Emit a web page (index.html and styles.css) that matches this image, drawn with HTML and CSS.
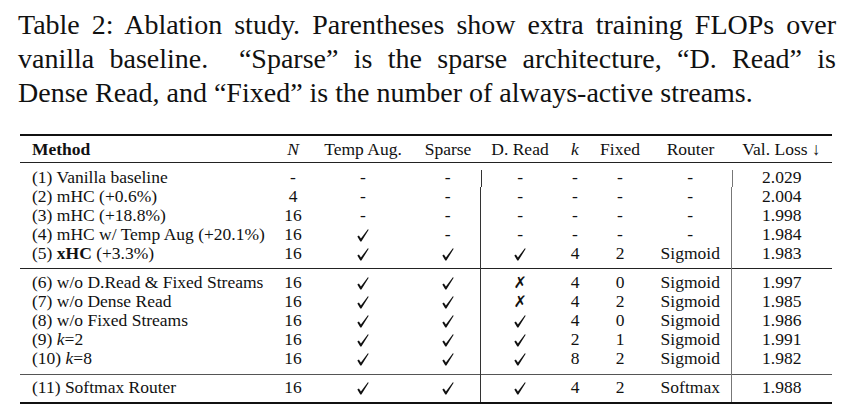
FILE: index.html
```html
<!DOCTYPE html>
<html>
<head>
<meta charset="utf-8">
<link rel="stylesheet" href="styles.css">
</head>
<body>
<svg class="defs" aria-hidden="true">
  <symbol id="ck" viewBox="0 0 12 13">
    <path d="M0.3 7.6 L1.9 6.5 L3.9 9.4 L10.9 0.2 L11.7 0.8 L4.4 12.6 L3.3 12.6 Z"/>
  </symbol>
</svg>
<p class="caption">Table 2: Ablation study. Parentheses show extra training FLOPs over vanilla baseline. &nbsp;“Sparse” is the sparse architecture, “D. Read” is <span class="nw">Dense Read,</span> and “Fixed” is the number of always-active streams.</p>
<table class="abl">
  <colgroup>
    <col class="c-method"><col class="c-n"><col class="c-temp"><col class="c-sparse"><col class="c-dread"><col class="c-k"><col class="c-fixed"><col class="c-router"><col class="c-loss">
  </colgroup>
  <thead>
    <tr>
      <th class="m"><b>Method</b></th><th><i>N</i></th><th>Temp Aug.</th><th>Sparse</th><th>D. Read</th><th><i>k</i></th><th>Fixed</th><th>Router</th><th>Val. Loss ↓</th>
    </tr>
  </thead>
  <tbody class="g1">
    <tr class="first"><td class="m">(1) Vanilla baseline</td><td>-</td><td>-</td><td>-</td><td class="vl">-</td><td>-</td><td>-</td><td>-</td><td class="vr">2.029</td></tr>
    <tr><td class="m">(2) mHC (+0.6%)</td><td>4</td><td>-</td><td>-</td><td class="vl">-</td><td>-</td><td>-</td><td>-</td><td class="vr">2.004</td></tr>
    <tr><td class="m">(3) mHC (+18.8%)</td><td>16</td><td>-</td><td>-</td><td class="vl">-</td><td>-</td><td>-</td><td>-</td><td class="vr">1.998</td></tr>
    <tr><td class="m">(4) mHC w/ Temp Aug (+20.1%)</td><td>16</td><td><svg class="ico"><use href="#ck"/></svg></td><td>-</td><td class="vl">-</td><td>-</td><td>-</td><td>-</td><td class="vr">1.984</td></tr>
    <tr class="last"><td class="m">(5) <b>xHC</b> (+3.3%)</td><td>16</td><td><svg class="ico"><use href="#ck"/></svg></td><td><svg class="ico"><use href="#ck"/></svg></td><td class="vl"><svg class="ico"><use href="#ck"/></svg></td><td>4</td><td>2</td><td>Sigmoid</td><td class="vr">1.983</td></tr>
  </tbody>
  <tbody class="g2">
    <tr class="first"><td class="m">(6) w/o D.Read &amp; Fixed Streams</td><td>16</td><td><svg class="ico"><use href="#ck"/></svg></td><td><svg class="ico"><use href="#ck"/></svg></td><td class="vl x">✗</td><td>4</td><td>0</td><td>Sigmoid</td><td class="vr">1.997</td></tr>
    <tr><td class="m">(7) w/o Dense Read</td><td>16</td><td><svg class="ico"><use href="#ck"/></svg></td><td><svg class="ico"><use href="#ck"/></svg></td><td class="vl x">✗</td><td>4</td><td>2</td><td>Sigmoid</td><td class="vr">1.985</td></tr>
    <tr><td class="m">(8) w/o Fixed Streams</td><td>16</td><td><svg class="ico"><use href="#ck"/></svg></td><td><svg class="ico"><use href="#ck"/></svg></td><td class="vl"><svg class="ico"><use href="#ck"/></svg></td><td>4</td><td>0</td><td>Sigmoid</td><td class="vr">1.986</td></tr>
    <tr><td class="m">(9) <i>k</i>=2</td><td>16</td><td><svg class="ico"><use href="#ck"/></svg></td><td><svg class="ico"><use href="#ck"/></svg></td><td class="vl"><svg class="ico"><use href="#ck"/></svg></td><td>2</td><td>1</td><td>Sigmoid</td><td class="vr">1.991</td></tr>
    <tr class="last"><td class="m">(10) <i>k</i>=8</td><td>16</td><td><svg class="ico"><use href="#ck"/></svg></td><td><svg class="ico"><use href="#ck"/></svg></td><td class="vl"><svg class="ico"><use href="#ck"/></svg></td><td>8</td><td>2</td><td>Sigmoid</td><td class="vr">1.982</td></tr>
  </tbody>
  <tbody class="g3">
    <tr class="first last"><td class="m">(11) Softmax Router</td><td>16</td><td><svg class="ico"><use href="#ck"/></svg></td><td><svg class="ico"><use href="#ck"/></svg></td><td class="vl"><svg class="ico"><use href="#ck"/></svg></td><td>4</td><td>2</td><td>Softmax</td><td class="vr">1.988</td></tr>
  </tbody>
</table>
</body>
</html>
```
FILE: styles.css
```css
html, body {
  margin: 0;
  padding: 0;
  background: #fff;
}
body {
  padding: 8px 16px 0 18px;
  font-family: "Liberation Serif", "Times New Roman", serif;
  color: #111;
}
.defs {
  display: none;
}
.caption {
  margin: 0;
  width: 818px;
  font-size: 28px;
  line-height: 34px;
  text-align: justify;
}
.nw {
  white-space: nowrap;
}
.abl {
  margin: 24px 0 0 2px;
  width: 812px;
  table-layout: fixed;
  border-collapse: collapse;
  font-size: 17.5px;
  border-top: 2px solid #111;
  border-bottom: 2px solid #111;
}
.c-method { width: 256px; }
.c-n { width: 34px; }
.c-temp { width: 106px; }
.c-sparse { width: 64px; }
.c-dread { width: 80px; }
.c-k { width: 30px; }
.c-fixed { width: 60px; }
.c-router { width: 81px; }
.c-loss { width: 101px; }
.abl th, .abl td {
  padding: 0;
  text-align: center;
  line-height: 19px;
  height: 19px;
  white-space: nowrap;
}
.abl th {
  font-weight: normal;
  height: 26px;
  border-bottom: 1px solid #222;
}
.abl .m {
  text-align: left;
  padding-left: 12px;
}
.g1 tr.first td { padding-top: 5px; }
.g1 tr.last td { padding-bottom: 5px; }
.g2 tr.first td { padding-top: 4px; }
.g2 tr.last td { padding-bottom: 6px; }
.g3 tr.first td { padding-top: 3px; }
.g3 tr.last td { padding-bottom: 5px; }
.g1 { border-bottom: 1px solid #222; }
.g2 { border-bottom: 1px solid #555; }
.abl td.vl { border-left: 1px solid #333; }
.abl td.vr { border-left: 1px solid #777; }
.abl .g1 tr.first td.vl,
.abl .g1 tr.first td.vr {
  border-left-color: transparent;
  background: linear-gradient(#333, #333) 0 7px / 1px 100% no-repeat;
}
.abl .g1 tr.first td.vr {
  background-image: linear-gradient(#777, #777);
}
.ico {
  width: 12px;
  height: 13px;
  vertical-align: -2px;
  fill: #111;
}
.x {
  font-family: "DejaVu Sans", sans-serif;
  font-size: 16px;
}
```
